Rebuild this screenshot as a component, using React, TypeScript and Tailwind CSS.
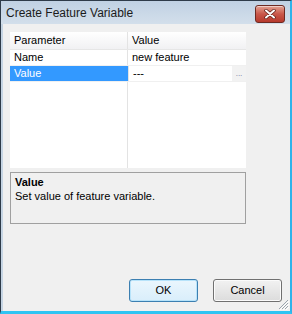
const font = { fontFamily: '"Liberation Sans", Arial, sans-serif' };

function CloseButton() {
  return (
    <div className="absolute right-[5px] top-[4px] flex h-[18px] w-[30px] items-center justify-center rounded-[3px] border border-[#6d2a22] bg-gradient-to-b from-[#e2a293] via-[#c9574a] to-[#b7392c] shadow-[inset_0_1px_0_rgba(255,255,255,0.5)]">
      <svg width="12" height="10" viewBox="0 0 12 10">
        <path d="M2 1.5 L10 8.5 M10 1.5 L2 8.5" stroke="#5b1d16" strokeWidth="3.4" strokeLinecap="round" />
        <path d="M2 1.5 L10 8.5 M10 1.5 L2 8.5" stroke="#ffffff" strokeWidth="2" strokeLinecap="round" />
      </svg>
    </div>
  );
}

function Grip() {
  return (
    <svg className="absolute bottom-[1px] right-[1px]" width="11" height="11" viewBox="0 0 11 11">
      <path d="M10 1 L1 10 M10 4 L4 10 M10 7 L7 10" stroke="#9aa4ad" strokeWidth="1" />
      <path d="M11 2 L2 11 M11 5 L5 11 M11 8 L8 11" stroke="#ffffff" strokeWidth="1" />
    </svg>
  );
}

export default function App() {
  return (
    <div className="h-[314px] w-[292px] overflow-hidden bg-white" style={font}>
      <div className="relative flex h-full w-full flex-col border-l border-t border-[#2e3b49] border-r-2 border-r-[#2fb3ea] border-b-[3px] border-b-[#2fc4f2] bg-[#c6d5e4]">
        <div className="relative flex h-[23px] items-center bg-gradient-to-b from-[#c0d1e3] to-[#d3dfeb] pl-[5px] text-[12px] text-[#1b1b1b]">
          Create Feature Variable
          <CloseButton />
        </div>
        <div className="relative ml-[2px] flex flex-1 flex-col bg-[#f0f0f0] pl-[7px] pt-[8px] text-[11px] text-black">
          <div className="flex h-[136px] w-[236px] flex-col bg-white">
            <div className="flex h-[18px] border-b border-[#e6e6e6] bg-gradient-to-b from-[#ffffff] to-[#f1f1f3]">
              <div className="flex w-[118px] items-center border-r border-[#e3e3e3] pl-[4px]">Parameter</div>
              <div className="flex flex-1 items-center pl-[4px]">Value</div>
            </div>
            <div className="flex h-[16px] border-b border-[#f0f0f0]">
              <div className="flex w-[118px] items-center border-r border-[#e3e3e3] pl-[4px]">Name</div>
              <div className="flex flex-1 items-center pl-[4px]">new feature</div>
            </div>
            <div className="flex h-[16px] border-b border-[#f0f0f0]">
              <div className="flex w-[118px] items-center bg-[#3399ff] pl-[4px] text-white">Value</div>
              <div className="flex flex-1 items-center border-l border-[#e3e3e3] pl-[4px]">
                <span className="flex-1">---</span>
                <span className="flex h-full w-[14px] items-end justify-center bg-[#f2f2f2] pb-[3px] text-[8px] leading-none text-[#6b6b9b]">...</span>
              </div>
            </div>
            <div className="flex flex-1">
              <div className="w-[118px] border-r border-[#e3e3e3]" />
              <div className="flex-1" />
            </div>
          </div>
          <div className="mt-[4px] flex h-[52px] w-[236px] flex-col border border-[#a0a0a0] bg-[#f0f0f0] pl-[4px] pt-[2px] leading-[14px]">
            <span className="font-bold">Value</span>
            <span>Set value of feature variable.</span>
          </div>
          <div className="mt-auto mb-[9px] flex justify-end gap-[15px] pr-[8px]">
            <button className="flex h-[23px] w-[69px] items-center justify-center rounded-[3px] border border-[#3c7fb1] bg-gradient-to-b from-[#eaf6fd] to-[#d9eefb] shadow-[inset_0_0_0_1px_#b7e3fa] text-[11px]">
              OK
            </button>
            <button className="flex h-[23px] w-[69px] items-center justify-center rounded-[3px] border border-[#707070] bg-gradient-to-b from-[#f2f2f2] to-[#dcdcdc] shadow-[inset_0_0_0_1px_#fbfbfb] text-[11px]">
              Cancel
            </button>
          </div>
          <Grip />
        </div>
      </div>
    </div>
  );
}
